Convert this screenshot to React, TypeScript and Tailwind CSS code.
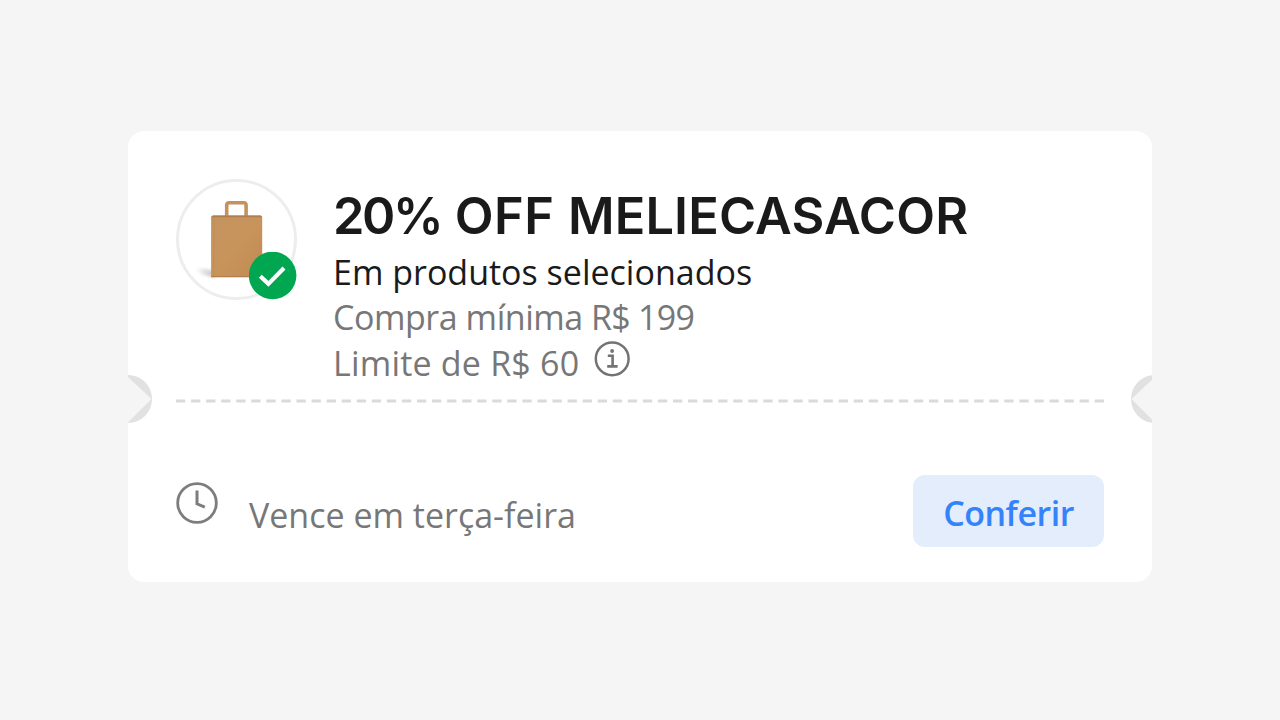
import React from 'react';

const ShoppingBag = () => (
  <svg width="80" height="84" viewBox="0 0 80 84" fill="none" aria-hidden="true">
    <defs>
      <linearGradient id="paper" x1="0" y1="0" x2="1" y2="1">
        <stop offset="0" stopColor="#c4935e" />
        <stop offset="0.5" stopColor="#c8945c" />
        <stop offset="1" stopColor="#c18b51" />
      </linearGradient>
      <linearGradient id="shadow" x1="0" y1="0" x2="1" y2="0">
        <stop offset="0" stopColor="#8a8178" stopOpacity="0" />
        <stop offset="1" stopColor="#8a8178" stopOpacity="0.5" />
      </linearGradient>
      <filter id="soft" x="-20%" y="-60%" width="140%" height="220%">
        <feGaussianBlur stdDeviation="1.6" />
      </filter>
    </defs>
    <path d="M2 72C8 71 14 72 22 74V80C14 80 7 78 2 72Z" fill="url(#shadow)" filter="url(#soft)" />
    <path d="M33.7 20V8Q33.9 5.8 35.9 5.8H50.9Q52.9 5.8 53.1 8V20" stroke="#c4925f" strokeWidth="3.6" />
    <path d="M18.1 19.7L19.8 18.4H67.7L69.2 19.7V80.2H18.1Z" fill="url(#paper)" />
    <path d="M18.1 20.2L19.8 18.4H67.7L69.2 20.2Z" fill="#b07e4e" />
    <path d="M20.7 20V80" stroke="#b88552" strokeOpacity="0.45" strokeWidth="0.8" />
    <path d="M18.1 79.6H69.2" stroke="#b37d49" strokeWidth="1" />
  </svg>
);

const CheckBadge = () => (
  <svg width="48" height="48" viewBox="0 0 48 48" fill="none" aria-hidden="true">
    <circle cx="23.6" cy="23.5" r="23.8" fill="#00a650" />
    <path d="M11.3 24.3L19.4 31.9L35 16.1" stroke="#fff" strokeWidth="4.2" />
  </svg>
);

const InfoIcon = () => (
  <svg width="36" height="36" viewBox="0 0 36 36" fill="none" stroke="#737373" aria-hidden="true">
    <circle cx="18.2" cy="17.8" r="16.4" strokeWidth="2.5" />
    <path d="M13.8 14.8H18.6V25.4M13.2 25.4H23.6" strokeWidth="2.6" />
    <circle cx="18.1" cy="10" r="1.9" fill="#737373" stroke="none" />
  </svg>
);

const ClockIcon = () => (
  <svg width="42" height="42" viewBox="0 0 42 42" fill="none" stroke="#7d7d7d" aria-hidden="true">
    <circle cx="21" cy="21" r="19.3" strokeWidth="2.8" />
    <path d="M21 8.4V21.8L28.8 25.2" strokeWidth="3" />
  </svg>
);

const Notch = ({ className }: { className?: string }) => (
  <svg className={className} width="24" height="48" viewBox="0 0 24 48" aria-hidden="true">
    <path d="M0 0A24 24 0 0 1 0 48Z" fill="#e1e1e1" />
    <path d="M0 2L23.5 24L0 47.5Z" fill="#f5f5f5" />
  </svg>
);

const Divider = () => (
  <div className="flex h-12 w-full items-center">
    <Notch />
    <svg width="928" height="4" viewBox="0 0 928 4" className="ml-6 mt-[3px] shrink-0" aria-hidden="true">
      <path d="M0 2H928" stroke="#dadada" strokeWidth="3.2" strokeDasharray="9.3 5.76" />
    </svg>
    <div className="ml-auto w-[21px] overflow-hidden">
      <Notch className="max-w-none -scale-x-100" />
    </div>
  </div>
);

const App = () => {
  return (
    <div className="flex h-screen justify-center overflow-hidden bg-[#f5f5f5] pt-[131px] font-['Open_Sans',sans-serif]">
      <div className="flex h-[451px] w-[1024px] flex-col overflow-hidden rounded-2xl bg-white">
        <div className="flex h-[244px] shrink-0 pl-12 pt-12">
          <div className="relative flex size-[121px] shrink-0 items-start justify-center rounded-full border-[3px] border-[#ededed] pt-[15px]">
            <div className="-ml-2">
              <ShoppingBag />
            </div>
            <div className="absolute left-[70px] top-[70px]">
              <CheckBadge />
            </div>
          </div>
          <div className="ml-[36px] whitespace-nowrap pt-[2px] text-[34px] leading-[45.4px]">
            <h1 className="h-[69px] font-['Inter',sans-serif] text-[50.5px] font-semibold leading-[70px] text-[#1a1a1a]">
              <span className="tracking-[-2.4px]">20%</span>
              <span className="tracking-[0.6px]"> OFF </span>
              <span className="tracking-[0.15px]">MELIECASACOR</span>
            </h1>
            <p className="text-[#1a1a1a]">Em produtos selecionados</p>
            <p className="text-[#777]">
              <span className="tracking-[-0.45px]">Compra mínima</span>
              <span className="tracking-[-0.7px]"> R$ 199</span>
            </p>
            <div className="flex text-[#777]">
              <p className="w-[261px] tracking-[0.2px]">Limite de R$ 60</p>
              <InfoIcon />
            </div>
          </div>
        </div>
        <Divider />
        <div className="flex pl-12 pr-12 pt-[52px]">
          <div className="pt-[7px]">
            <ClockIcon />
          </div>
          <p className="ml-[31px] mt-[17px] whitespace-nowrap text-[34px] leading-[46px] text-[#777]">
            Vence em terça-feira
          </p>
          <button className="ml-auto h-[72px] w-[191px] rounded-xl bg-[#e3edfb] pt-[5px] text-[34px] font-semibold leading-[67px] tracking-[-0.5px] text-[#3483fa]">
            Conferir
          </button>
        </div>
      </div>
    </div>
  );
};

export default App;
